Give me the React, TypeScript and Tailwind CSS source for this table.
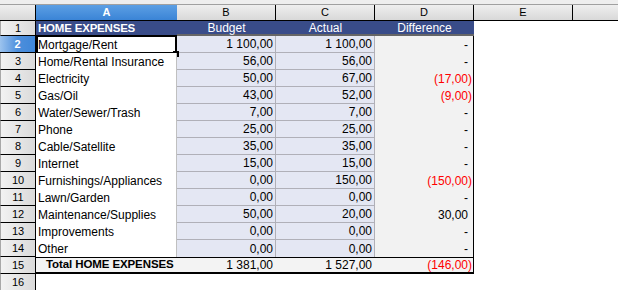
const rows: [string, string, string, string][] = [
  ["Mortgage/Rent", "1 100,00", "1 100,00", "-"],
  ["Home/Rental Insurance", "56,00", "56,00", "-"],
  ["Electricity", "50,00", "67,00", "(17,00)"],
  ["Gas/Oil", "43,00", "52,00", "(9,00)"],
  ["Water/Sewer/Trash", "7,00", "7,00", "-"],
  ["Phone", "25,00", "25,00", "-"],
  ["Cable/Satellite", "35,00", "35,00", "-"],
  ["Internet", "15,00", "15,00", "-"],
  ["Furnishings/Appliances", "0,00", "150,00", "(150,00)"],
  ["Lawn/Garden", "0,00", "0,00", "-"],
  ["Maintenance/Supplies", "50,00", "20,00", "30,00"],
  ["Improvements", "0,00", "0,00", "-"],
  ["Other", "0,00", "0,00", "-"],
];

const colHead =
  "flex items-center justify-center border-r border-b border-black bg-gradient-to-b from-[#efefef] to-[#d8d8d8] text-[11px] text-black";

function RowHead({ n, selected }: { n: number; selected?: boolean }) {
  return (
    <div
      className={
        selected
          ? "flex items-center justify-center border-r border-b border-black bg-gradient-to-r from-[#9cc3ee] via-[#4d8fdc] to-[#3f86d8] text-[11px] font-bold text-white"
          : "flex items-center justify-center border-l border-l-[#a8a8a8] border-r border-b border-black bg-gradient-to-r from-[#f2f2f2] to-[#dadada] text-[11px] text-black"
      }
    >
      {n}
    </div>
  );
}

export default function App() {
  return (
    <div className="grid h-[290px] w-[618px] grid-cols-[36px_141px_99px_99px_99px_99px_1fr] grid-rows-[5px_16px_15px_repeat(15,17px)] overflow-hidden bg-white font-['Liberation_Sans',Arial,sans-serif] text-[12px] text-black">
      {/* strip above the column headers */}
      <div className="col-span-7 border-b border-[#a0a0a0] bg-[#eeeeee]" />

      {/* column headers */}
      <div className={colHead} />
      <div className="flex items-center justify-center border-b border-black bg-gradient-to-b from-[#5c9fe4] to-[#3a84d6] text-[11px] font-bold text-white">
        A
      </div>
      <div className={colHead}>B</div>
      <div className={colHead}>C</div>
      <div className={colHead}>D</div>
      <div className={colHead}>E</div>
      <div className="border-b border-black bg-gradient-to-b from-[#efefef] to-[#d8d8d8]" />

      {/* row 1 */}
      <RowHead n={1} />
      <div className="flex items-center whitespace-nowrap bg-[#394c89] pl-[2px] text-[11.5px] font-bold tracking-[-0.2px] text-white">
        HOME EXPENSES
      </div>
      <div className="flex items-center justify-center border-b-2 border-[#666666] bg-[#394c89] text-white">Budget</div>
      <div className="flex items-center justify-center border-b-2 border-[#666666] bg-[#394c89] text-white">Actual</div>
      <div className="flex items-center justify-center border-b-2 border-[#666666] bg-[#394c89] text-white">Difference</div>
      <div />
      <div />

      {rows.map(([label, budget, actual, diff], i) => {
        const n = i + 2;
        const last = n === 14;
        const red = diff.startsWith("(");
        return (
          <div key={n} className="contents">
            <RowHead n={n} selected={n === 2} />
            <div className="relative flex items-center whitespace-nowrap border-r border-[#c0c0c0] bg-white pl-[2px]">
              {label}
              {n === 2 && (
                <>
                  <div className="absolute -top-[1px] left-0 -right-[1px] -bottom-[1px] border-2 border-black" />
                  <div className="absolute -right-[3px] -bottom-[4px] h-[6px] w-[6px] bg-black" />
                </>
              )}
            </div>
            <div
              className={`flex items-center justify-end border-r border-[#b0b0b8] bg-[#e4e7f3] pr-[2px] ${last ? "" : "border-b"}`}
            >
              {budget}
            </div>
            <div
              className={`flex items-center justify-end border-r border-[#b0b0b8] bg-[#e4e7f3] pr-[2px] ${last ? "" : "border-b"}`}
            >
              {actual}
            </div>
            <div
              className={
                red
                  ? "flex items-center justify-end border-r border-black bg-[#f2f2f2] pr-[1px] text-[#ff0000]"
                  : "flex items-center justify-end border-r border-black bg-[#f2f2f2] pr-[5px]"
              }
            >
              {diff}
            </div>
            <div />
            <div />
          </div>
        );
      })}

      {/* row 15 totals */}
      <RowHead n={15} />
      <div className="flex items-center overflow-hidden whitespace-nowrap border-t border-b-2 border-black bg-[#f3f3f3] pl-[10px] text-[11.5px] font-bold tracking-[-0.1px]">
        Total HOME EXPENSES
      </div>
      <div className="flex items-center justify-end border-t border-b-2 border-black bg-[#f3f3f3] pr-[3px]">1 381,00</div>
      <div className="flex items-center justify-end border-t border-b-2 border-black bg-[#f3f3f3] pr-[3px]">1 527,00</div>
      <div className="flex items-center justify-end border-t border-r border-b-2 border-black bg-[#f3f3f3] pr-[1px] text-[#ff0000]">
        (146,00)
      </div>
      <div />
      <div />

      {/* row 16 */}
      <RowHead n={16} />
      <div className="col-span-6" />
    </div>
  );
}
